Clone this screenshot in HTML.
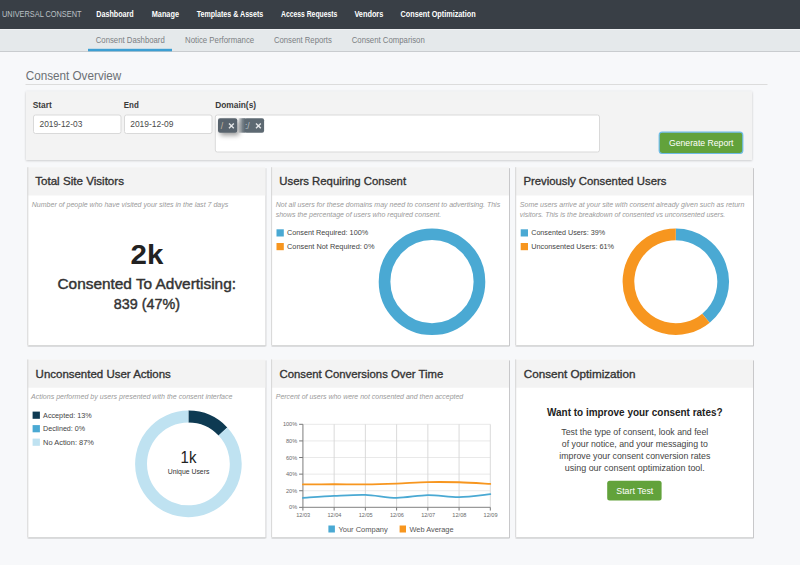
<!DOCTYPE html>
<html><head><meta charset="utf-8"><title>Consent Dashboard</title>
<style>html,body{margin:0;padding:0;background:#f7f8fa;}svg{display:block;}text{font-family:"Liberation Sans",sans-serif;}</style>
</head><body>
<svg width="800" height="565" viewBox="0 0 800 565">
<defs>
<filter id="sh" x="-5%" y="-5%" width="110%" height="115%"><feDropShadow dx="0.5" dy="1.0" stdDeviation="0.65" flood-color="#000" flood-opacity="0.38"/></filter>
<filter id="psh" x="-5%" y="-20%" width="110%" height="140%"><feDropShadow dx="0" dy="0.6" stdDeviation="0.9" flood-color="#000" flood-opacity="0.22"/></filter>
<linearGradient id="tg" x1="0" y1="0" x2="1" y2="0"><stop offset="0" stop-color="#5d6972" stop-opacity="0.15"/><stop offset="0.6" stop-color="#5d6972" stop-opacity="0.85"/><stop offset="1" stop-color="#5d6972" stop-opacity="1"/></linearGradient>
<filter id="tagsh" x="-100%" y="-100%" width="300%" height="300%"><feDropShadow dx="2" dy="2.5" stdDeviation="2.6" flood-color="#000" flood-opacity="0.4"/></filter>
</defs>
<rect x="0.00" y="0.00" width="800.00" height="565.00" fill="#f7f8fa" />
<rect x="0.00" y="0.00" width="800.00" height="29.00" fill="#393f46" />
<text x="2.00" y="17.10" font-size="8.4" font-weight="normal" font-style="normal" fill="#bcc1c6" text-anchor="start" textLength="79.50" lengthAdjust="spacingAndGlyphs" >UNIVERSAL CONSENT</text>
<text x="96.25" y="17.10" font-size="8.2" font-weight="bold" font-style="normal" fill="#ffffff" text-anchor="start" textLength="37.50" lengthAdjust="spacingAndGlyphs" >Dashboard</text>
<text x="151.75" y="17.10" font-size="8.2" font-weight="bold" font-style="normal" fill="#ffffff" text-anchor="start" textLength="27.20" lengthAdjust="spacingAndGlyphs" >Manage</text>
<text x="196.75" y="17.10" font-size="8.2" font-weight="bold" font-style="normal" fill="#ffffff" text-anchor="start" textLength="66.50" lengthAdjust="spacingAndGlyphs" >Templates &amp; Assets</text>
<text x="281.00" y="17.10" font-size="8.2" font-weight="bold" font-style="normal" fill="#ffffff" text-anchor="start" textLength="56.30" lengthAdjust="spacingAndGlyphs" >Access Requests</text>
<text x="354.40" y="17.10" font-size="8.2" font-weight="bold" font-style="normal" fill="#ffffff" text-anchor="start" textLength="28.90" lengthAdjust="spacingAndGlyphs" >Vendors</text>
<text x="400.60" y="17.10" font-size="8.2" font-weight="bold" font-style="normal" fill="#ffffff" text-anchor="start" textLength="75.10" lengthAdjust="spacingAndGlyphs" >Consent Optimization</text>
<rect x="0.00" y="29.00" width="800.00" height="22.00" fill="#e5e9eb" />
<rect x="0.00" y="51.00" width="800.00" height="1.00" fill="#c9cccf" />
<rect x="0.00" y="29.00" width="800.00" height="1.00" fill="#eef1f3" />
<text x="95.75" y="43.20" font-size="8.2" font-weight="normal" font-style="normal" fill="#7b7f83" text-anchor="start" textLength="69.00" lengthAdjust="spacingAndGlyphs" >Consent Dashboard</text>
<text x="185.00" y="43.20" font-size="8.2" font-weight="normal" font-style="normal" fill="#7b7f83" text-anchor="start" textLength="69.20" lengthAdjust="spacingAndGlyphs" >Notice Performance</text>
<text x="273.90" y="43.20" font-size="8.2" font-weight="normal" font-style="normal" fill="#7b7f83" text-anchor="start" textLength="57.90" lengthAdjust="spacingAndGlyphs" >Consent Reports</text>
<text x="351.70" y="43.20" font-size="8.2" font-weight="normal" font-style="normal" fill="#7b7f83" text-anchor="start" textLength="73.10" lengthAdjust="spacingAndGlyphs" >Consent Comparison</text>
<rect x="88.00" y="48.80" width="84.00" height="2.50" fill="#3d9fd3" />
<text x="25.70" y="80.00" font-size="12.4" font-weight="normal" font-style="normal" fill="#6c7074" text-anchor="start" textLength="95.60" lengthAdjust="spacingAndGlyphs" >Consent Overview</text>
<rect x="25.50" y="84.00" width="742.00" height="1.00" fill="#dcdcdc" />
<g filter="url(#psh)">
<rect x="26.00" y="91.50" width="726.00" height="68.50" fill="#f3f3f3" />
</g>
<text x="32.70" y="108.20" font-size="8.8" font-weight="bold" font-style="normal" fill="#3a3a3a" text-anchor="start" textLength="19.10" lengthAdjust="spacingAndGlyphs" >Start</text>
<text x="123.80" y="108.20" font-size="8.8" font-weight="bold" font-style="normal" fill="#3a3a3a" text-anchor="start" textLength="15.00" lengthAdjust="spacingAndGlyphs" >End</text>
<text x="215.20" y="108.20" font-size="8.8" font-weight="bold" font-style="normal" fill="#3a3a3a" text-anchor="start" textLength="40.90" lengthAdjust="spacingAndGlyphs" >Domain(s)</text>
<rect x="33.50" y="115.00" width="87.50" height="18.50" rx="2" fill="#fff" stroke="#d9d9d9" stroke-width="1"/>
<rect x="124.50" y="115.00" width="87.50" height="18.50" rx="2" fill="#fff" stroke="#d9d9d9" stroke-width="1"/>
<rect x="215.30" y="115.00" width="384.20" height="37.00" rx="2" fill="#fff" stroke="#d9d9d9" stroke-width="1"/>
<text x="39.50" y="126.95" font-size="8.9" font-weight="normal" font-style="normal" fill="#4a4a4a" text-anchor="start" textLength="42.80" lengthAdjust="spacingAndGlyphs" >2019-12-03</text>
<text x="130.20" y="126.95" font-size="8.9" font-weight="normal" font-style="normal" fill="#4a4a4a" text-anchor="start" textLength="43.20" lengthAdjust="spacingAndGlyphs" >2019-12-09</text>
<rect x="244.5" y="118.2" width="19.6" height="14.5" rx="2" fill="#5d6972"/>
<rect x="238.5" y="118.2" width="7" height="14.5" fill="url(#tg)"/>
<text x="245.00" y="128.60" font-size="8.5" font-weight="normal" font-style="normal" fill="#b8c0c6" text-anchor="start" >:/</text>
<path d="M255.99999999999997 123.5L260.79999999999995 128.3M260.79999999999995 123.5L255.99999999999997 128.3" stroke="#e4e6e8" stroke-width="1.4"/>
<g filter="url(#tagsh)">
<rect x="218" y="118.2" width="19.2" height="14.5" rx="2" fill="#58646d"/>
</g>
<text x="220.80" y="128.60" font-size="8.5" font-weight="normal" font-style="normal" fill="#c9b9a0" text-anchor="start" >/</text>
<path d="M229.0 123.5L233.8 128.3M233.8 123.5L229.0 128.3" stroke="#e4e6e8" stroke-width="1.4"/>
<rect x="659.2" y="132.2" width="83.6" height="21.3" rx="3" fill="#62a23b" stroke="#6dbbe6" stroke-width="1.2"/>
<text x="669.00" y="146.00" font-size="8.6" font-weight="normal" font-style="normal" fill="#fff" text-anchor="start" textLength="64.50" lengthAdjust="spacingAndGlyphs" >Generate Report</text>
<g filter="url(#sh)">
<rect x="27.30" y="167.20" width="238.00" height="178.10" fill="#ffffff" />
</g>
<rect x="27.30" y="167.20" width="238.00" height="28.30" fill="#f3f3f3" />
<rect x="27.30" y="167.20" width="1.00" height="178.10" fill="#d6d6d6" />
<g filter="url(#sh)">
<rect x="271.10" y="167.20" width="237.90" height="178.10" fill="#ffffff" />
</g>
<rect x="271.10" y="167.20" width="237.90" height="28.30" fill="#f3f3f3" />
<rect x="271.10" y="167.20" width="1.00" height="178.10" fill="#d6d6d6" />
<g filter="url(#sh)">
<rect x="515.20" y="167.20" width="237.80" height="178.10" fill="#ffffff" />
</g>
<rect x="515.20" y="167.20" width="237.80" height="28.30" fill="#f3f3f3" />
<rect x="515.20" y="167.20" width="1.00" height="178.10" fill="#d6d6d6" />
<g filter="url(#sh)">
<rect x="27.30" y="359.40" width="238.00" height="177.90" fill="#ffffff" />
</g>
<rect x="27.30" y="359.40" width="238.00" height="28.30" fill="#f3f3f3" />
<rect x="27.30" y="359.40" width="1.00" height="177.90" fill="#d6d6d6" />
<g filter="url(#sh)">
<rect x="271.10" y="359.40" width="237.90" height="177.90" fill="#ffffff" />
</g>
<rect x="271.10" y="359.40" width="237.90" height="28.30" fill="#f3f3f3" />
<rect x="271.10" y="359.40" width="1.00" height="177.90" fill="#d6d6d6" />
<g filter="url(#sh)">
<rect x="515.20" y="359.40" width="237.80" height="177.90" fill="#ffffff" />
</g>
<rect x="515.20" y="359.40" width="237.80" height="28.30" fill="#f3f3f3" />
<rect x="515.20" y="359.40" width="1.00" height="177.90" fill="#d6d6d6" />
<text x="35.20" y="185.30" font-size="10.5" font-weight="normal" font-style="normal" fill="#333" text-anchor="start" textLength="88.80" lengthAdjust="spacingAndGlyphs"  stroke="#333" stroke-width="0.32">Total Site Visitors</text>
<text x="279.30" y="185.30" font-size="10.5" font-weight="normal" font-style="normal" fill="#333" text-anchor="start" textLength="126.80" lengthAdjust="spacingAndGlyphs"  stroke="#333" stroke-width="0.32">Users Requiring Consent</text>
<text x="523.40" y="185.30" font-size="10.5" font-weight="normal" font-style="normal" fill="#333" text-anchor="start" textLength="143.00" lengthAdjust="spacingAndGlyphs"  stroke="#333" stroke-width="0.32">Previously Consented Users</text>
<text x="35.60" y="377.50" font-size="10.5" font-weight="normal" font-style="normal" fill="#333" text-anchor="start" textLength="135.20" lengthAdjust="spacingAndGlyphs"  stroke="#333" stroke-width="0.32">Unconsented User Actions</text>
<text x="279.50" y="377.50" font-size="10.5" font-weight="normal" font-style="normal" fill="#333" text-anchor="start" textLength="163.70" lengthAdjust="spacingAndGlyphs"  stroke="#333" stroke-width="0.32">Consent Conversions Over Time</text>
<text x="523.75" y="377.50" font-size="10.5" font-weight="normal" font-style="normal" fill="#333" text-anchor="start" textLength="111.70" lengthAdjust="spacingAndGlyphs"  stroke="#333" stroke-width="0.32">Consent Optimization</text>
<text x="31.75" y="206.90" font-size="7.2" font-weight="normal" font-style="italic" fill="#9a9a9a" text-anchor="start" textLength="196.50" lengthAdjust="spacingAndGlyphs" >Number of people who have visited your sites in the last 7 days</text>
<text x="275.70" y="207.00" font-size="7.2" font-weight="normal" font-style="italic" fill="#9a9a9a" text-anchor="start" textLength="224.50" lengthAdjust="spacingAndGlyphs" >Not all users for these domains may need to consent to advertising. This</text>
<text x="275.70" y="216.60" font-size="7.2" font-weight="normal" font-style="italic" fill="#9a9a9a" text-anchor="start" textLength="165.50" lengthAdjust="spacingAndGlyphs" >shows the percentage of users who required consent.</text>
<text x="519.80" y="207.00" font-size="7.2" font-weight="normal" font-style="italic" fill="#9a9a9a" text-anchor="start" textLength="224.50" lengthAdjust="spacingAndGlyphs" >Some users arrive at your site with consent already given such as return</text>
<text x="519.80" y="216.60" font-size="7.2" font-weight="normal" font-style="italic" fill="#9a9a9a" text-anchor="start" textLength="205.50" lengthAdjust="spacingAndGlyphs" >visitors. This is the breakdown of consented vs unconsented users.</text>
<text x="31.00" y="398.90" font-size="7.2" font-weight="normal" font-style="italic" fill="#9a9a9a" text-anchor="start" textLength="201.50" lengthAdjust="spacingAndGlyphs" >Actions performed by users presented with the consent interface</text>
<text x="275.75" y="398.90" font-size="7.2" font-weight="normal" font-style="italic" fill="#9a9a9a" text-anchor="start" textLength="187.50" lengthAdjust="spacingAndGlyphs" >Percent of users who were not consented and then accepted</text>
<text x="130.60" y="264.20" font-size="28.4" font-weight="bold" font-style="normal" fill="#222" text-anchor="start" textLength="32.80" lengthAdjust="spacingAndGlyphs" >2k</text>
<text x="57.50" y="289.30" font-size="14.6" font-weight="normal" font-style="normal" fill="#333" text-anchor="start" textLength="178.50" lengthAdjust="spacingAndGlyphs"  stroke="#333" stroke-width="0.42">Consented To Advertising:</text>
<text x="113.75" y="308.80" font-size="14.6" font-weight="normal" font-style="normal" fill="#333" text-anchor="start" textLength="66.20" lengthAdjust="spacingAndGlyphs"  stroke="#333" stroke-width="0.42">839 (47%)</text>
<rect x="276.50" y="229.30" width="7.30" height="7.20" fill="#4aa9d3" />
<text x="287.00" y="235.40" font-size="7.3" font-weight="normal" font-style="normal" fill="#444" text-anchor="start" textLength="81.20" lengthAdjust="spacingAndGlyphs" >Consent Required: 100%</text>
<rect x="276.50" y="243.00" width="7.30" height="7.20" fill="#f7961f" />
<text x="287.00" y="249.10" font-size="7.3" font-weight="normal" font-style="normal" fill="#444" text-anchor="start" textLength="87.50" lengthAdjust="spacingAndGlyphs" >Consent Not Required: 0%</text>
<rect x="520.70" y="229.30" width="7.30" height="7.20" fill="#4aa9d3" />
<text x="531.20" y="235.40" font-size="7.3" font-weight="normal" font-style="normal" fill="#444" text-anchor="start" textLength="73.90" lengthAdjust="spacingAndGlyphs" >Consented Users: 39%</text>
<rect x="520.70" y="243.00" width="7.30" height="7.20" fill="#f7961f" />
<text x="531.20" y="249.10" font-size="7.3" font-weight="normal" font-style="normal" fill="#444" text-anchor="start" textLength="82.90" lengthAdjust="spacingAndGlyphs" >Unconsented Users: 61%</text>
<rect x="32.60" y="411.60" width="7.30" height="7.20" fill="#0e3a52" />
<text x="43.10" y="417.70" font-size="7.3" font-weight="normal" font-style="normal" fill="#444" text-anchor="start" textLength="48.50" lengthAdjust="spacingAndGlyphs" >Accepted: 13%</text>
<rect x="32.60" y="425.10" width="7.30" height="7.20" fill="#4aa9d3" />
<text x="43.10" y="431.20" font-size="7.3" font-weight="normal" font-style="normal" fill="#444" text-anchor="start" textLength="42.00" lengthAdjust="spacingAndGlyphs" >Declined: 0%</text>
<rect x="32.60" y="438.60" width="7.30" height="7.20" fill="#bfe2f1" />
<text x="43.10" y="444.70" font-size="7.3" font-weight="normal" font-style="normal" fill="#444" text-anchor="start" textLength="50.80" lengthAdjust="spacingAndGlyphs" >No Action: 87%</text>
<circle cx="432" cy="281.7" r="47.45" fill="none" stroke="#4aa9d3" stroke-width="11.699999999999996"/>
<path d="M675.800 234.350A47.35 47.35 0 0 1 705.982 318.184" fill="none" stroke="#4aa9d3" stroke-width="11.700000000000003"/>
<path d="M705.982 318.184A47.35 47.35 0 1 1 675.800 234.350" fill="none" stroke="#f7961f" stroke-width="11.700000000000003"/>
<path d="M188.400 416.550A47.349999999999994 47.349999999999994 0 0 1 222.917 431.487" fill="none" stroke="#0e3a52" stroke-width="11.899999999999999"/>
<path d="M222.917 431.487A47.349999999999994 47.349999999999994 0 1 1 188.400 416.550" fill="none" stroke="#bfe2f1" stroke-width="11.899999999999999"/>
<text x="180.60" y="462.80" font-size="16.3" font-weight="normal" font-style="normal" fill="#222" text-anchor="start" textLength="15.80" lengthAdjust="spacingAndGlyphs" >1k</text>
<text x="167.80" y="473.80" font-size="7.0" font-weight="normal" font-style="normal" fill="#333" text-anchor="start" textLength="41.60" lengthAdjust="spacingAndGlyphs" >Unique Users</text>
<line x1="302.9" y1="424.30" x2="490.3" y2="424.30" stroke="#e6e6e6" stroke-width="0.9"/>
<line x1="302.9" y1="440.91" x2="490.3" y2="440.91" stroke="#e6e6e6" stroke-width="0.9"/>
<line x1="302.9" y1="457.52" x2="490.3" y2="457.52" stroke="#e6e6e6" stroke-width="0.9"/>
<line x1="302.9" y1="474.13" x2="490.3" y2="474.13" stroke="#e6e6e6" stroke-width="0.9"/>
<line x1="302.9" y1="490.74" x2="490.3" y2="490.74" stroke="#e6e6e6" stroke-width="0.9"/>
<line x1="334.13" y1="424.3" x2="334.13" y2="507.35" stroke="#d6d6d6" stroke-width="0.9"/>
<line x1="365.37" y1="424.3" x2="365.37" y2="507.35" stroke="#d6d6d6" stroke-width="0.9"/>
<line x1="396.60" y1="424.3" x2="396.60" y2="507.35" stroke="#d6d6d6" stroke-width="0.9"/>
<line x1="427.83" y1="424.3" x2="427.83" y2="507.35" stroke="#d6d6d6" stroke-width="0.9"/>
<line x1="459.07" y1="424.3" x2="459.07" y2="507.35" stroke="#d6d6d6" stroke-width="0.9"/>
<line x1="490.30" y1="424.3" x2="490.30" y2="507.35" stroke="#d6d6d6" stroke-width="0.9"/>
<line x1="302.9" y1="424.3" x2="302.9" y2="507.35" stroke="#9a9a9a" stroke-width="1.3"/>
<line x1="302.9" y1="507.35" x2="490.3" y2="507.35" stroke="#9a9a9a" stroke-width="1.3"/>
<line x1="299.09999999999997" y1="424.30" x2="302.9" y2="424.30" stroke="#777" stroke-width="1"/>
<text x="297.20" y="426.30" font-size="5.6" font-weight="normal" font-style="normal" fill="#6a6a6a" text-anchor="end" >100%</text>
<line x1="299.09999999999997" y1="440.91" x2="302.9" y2="440.91" stroke="#777" stroke-width="1"/>
<text x="297.20" y="442.91" font-size="5.6" font-weight="normal" font-style="normal" fill="#6a6a6a" text-anchor="end" >80%</text>
<line x1="299.09999999999997" y1="457.52" x2="302.9" y2="457.52" stroke="#777" stroke-width="1"/>
<text x="297.20" y="459.52" font-size="5.6" font-weight="normal" font-style="normal" fill="#6a6a6a" text-anchor="end" >60%</text>
<line x1="299.09999999999997" y1="474.13" x2="302.9" y2="474.13" stroke="#777" stroke-width="1"/>
<text x="297.20" y="476.13" font-size="5.6" font-weight="normal" font-style="normal" fill="#6a6a6a" text-anchor="end" >40%</text>
<line x1="299.09999999999997" y1="490.74" x2="302.9" y2="490.74" stroke="#777" stroke-width="1"/>
<text x="297.20" y="492.74" font-size="5.6" font-weight="normal" font-style="normal" fill="#6a6a6a" text-anchor="end" >20%</text>
<line x1="299.09999999999997" y1="507.35" x2="302.9" y2="507.35" stroke="#777" stroke-width="1"/>
<text x="297.20" y="509.35" font-size="5.6" font-weight="normal" font-style="normal" fill="#6a6a6a" text-anchor="end" >0%</text>
<line x1="302.90" y1="507.35" x2="302.90" y2="510.55" stroke="#777" stroke-width="1"/>
<text x="303.20" y="516.50" font-size="5.6" font-weight="normal" font-style="normal" fill="#6a6a6a" text-anchor="middle" >12/03</text>
<line x1="334.13" y1="507.35" x2="334.13" y2="510.55" stroke="#777" stroke-width="1"/>
<text x="334.43" y="516.50" font-size="5.6" font-weight="normal" font-style="normal" fill="#6a6a6a" text-anchor="middle" >12/04</text>
<line x1="365.37" y1="507.35" x2="365.37" y2="510.55" stroke="#777" stroke-width="1"/>
<text x="365.67" y="516.50" font-size="5.6" font-weight="normal" font-style="normal" fill="#6a6a6a" text-anchor="middle" >12/05</text>
<line x1="396.60" y1="507.35" x2="396.60" y2="510.55" stroke="#777" stroke-width="1"/>
<text x="396.90" y="516.50" font-size="5.6" font-weight="normal" font-style="normal" fill="#6a6a6a" text-anchor="middle" >12/06</text>
<line x1="427.83" y1="507.35" x2="427.83" y2="510.55" stroke="#777" stroke-width="1"/>
<text x="428.13" y="516.50" font-size="5.6" font-weight="normal" font-style="normal" fill="#6a6a6a" text-anchor="middle" >12/07</text>
<line x1="459.07" y1="507.35" x2="459.07" y2="510.55" stroke="#777" stroke-width="1"/>
<text x="459.37" y="516.50" font-size="5.6" font-weight="normal" font-style="normal" fill="#6a6a6a" text-anchor="middle" >12/08</text>
<line x1="490.30" y1="507.35" x2="490.30" y2="510.55" stroke="#777" stroke-width="1"/>
<text x="490.60" y="516.50" font-size="5.6" font-weight="normal" font-style="normal" fill="#6a6a6a" text-anchor="middle" >12/09</text>
<path d="M302.90 484.43 C307.58 484.40 324.76 484.26 334.13 484.26 C343.50 484.26 356.00 484.53 365.37 484.43 C374.74 484.33 387.23 483.95 396.60 483.60 C405.97 483.25 418.46 482.30 427.83 482.10 C437.20 481.90 449.70 482.01 459.07 482.27 C468.44 482.53 485.61 483.61 490.30 483.85" fill="none" stroke="#f7961f" stroke-width="1.8" stroke-linecap="round"/>
<path d="M302.90 497.88 C307.58 497.60 324.76 496.42 334.13 495.97 C343.50 495.52 356.00 494.61 365.37 494.89 C374.74 495.18 387.23 497.86 396.60 497.88 C405.97 497.91 418.46 495.18 427.83 495.06 C437.20 494.93 449.70 497.19 459.07 497.05 C468.44 496.91 485.61 494.58 490.30 494.15" fill="none" stroke="#4aa9d3" stroke-width="1.8" stroke-linecap="round"/>
<rect x="328.40" y="525.50" width="6.50" height="7.00" fill="#4aa9d3" />
<text x="338.40" y="531.80" font-size="7.4" font-weight="normal" font-style="normal" fill="#555" text-anchor="start" textLength="49.40" lengthAdjust="spacingAndGlyphs" >Your Company</text>
<rect x="399.60" y="525.50" width="6.40" height="7.00" fill="#f7961f" />
<text x="409.50" y="531.80" font-size="7.4" font-weight="normal" font-style="normal" fill="#555" text-anchor="start" textLength="44.10" lengthAdjust="spacingAndGlyphs" >Web Average</text>
<text x="547.00" y="416.10" font-size="10.0" font-weight="bold" font-style="normal" fill="#222" text-anchor="start" textLength="175.60" lengthAdjust="spacingAndGlyphs" >Want to improve your consent rates?</text>
<text x="561.30" y="434.90" font-size="8.75" font-weight="normal" font-style="normal" fill="#444" text-anchor="start" textLength="147.00" lengthAdjust="spacingAndGlyphs" >Test the type of consent, look and feel</text>
<text x="561.80" y="447.00" font-size="8.75" font-weight="normal" font-style="normal" fill="#444" text-anchor="start" textLength="146.00" lengthAdjust="spacingAndGlyphs" >of your notice, and your messaging to</text>
<text x="559.30" y="458.80" font-size="8.75" font-weight="normal" font-style="normal" fill="#444" text-anchor="start" textLength="151.00" lengthAdjust="spacingAndGlyphs" >improve your consent conversion rates</text>
<text x="564.80" y="470.60" font-size="8.75" font-weight="normal" font-style="normal" fill="#444" text-anchor="start" textLength="140.00" lengthAdjust="spacingAndGlyphs" >using our consent optimization tool.</text>
<rect x="607.2" y="480.8" width="54.4" height="19.8" rx="2.5" fill="#62a23b"/>
<text x="616.30" y="494.00" font-size="8.6" font-weight="normal" font-style="normal" fill="#fff" text-anchor="start" textLength="37.00" lengthAdjust="spacingAndGlyphs" >Start Test</text>
</svg>
</body></html>
